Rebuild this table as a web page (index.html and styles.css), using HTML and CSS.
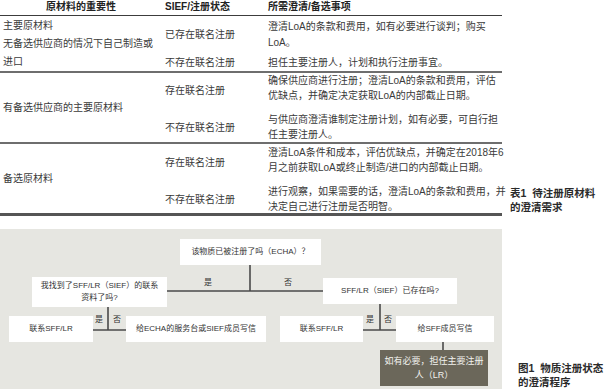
FILE: index.html
```html
<!DOCTYPE html>
<html lang="zh">
<head>
<meta charset="utf-8">
<link rel="stylesheet" href="styles.css">
</head>
<body>
<section class="top">
  <div class="tbl">
    <div class="hd hd1">原材料的重要性</div>
    <div class="hd">SIEF/注册状态</div>
    <div class="hd">所需澄清/备选事项</div>

    <div class="c1 g1 sep">主要原材料<br>无备选供应商的情况下自己制造或<br>进口</div>
    <div class="c2">已存在联名注册</div>
    <div class="c3">澄清LoA的条款和费用，如有必要进行谈判；购买<br>LoA。</div>
    <div class="c2 sep b1">不存在联名注册</div>
    <div class="c3 sep b1">担任主要注册人，计划和执行注册事宜。</div>

    <div class="c1 g2 sep">有备选供应商的主要原材料</div>
    <div class="c2">存在联名注册</div>
    <div class="c3 up">确保供应商进行注册；澄清LoA的条款和费用，评估<br>优缺点，并确定决定获取LoA的内部截止日期。</div>
    <div class="c2 sep b2">不存在联名注册</div>
    <div class="c3 sep b2">与供应商澄清谁制定注册计划，如有必要，可自行担<br>任主要注册人。</div>

    <div class="c1 g3 end">备选原材料</div>
    <div class="c2">存在联名注册</div>
    <div class="c3 up">澄清LoA条件和成本，评估优缺点，并确定在2018年6<br>月之前获取LoA或终止制造/进口的内部截止日期。</div>
    <div class="c2 end b2">不存在联名注册</div>
    <div class="c3 end b2">进行观察，如果需要的话，澄清LoA的条款和费用，并<br>决定自己进行注册是否明智。</div>
  </div>
  <p class="cap cap1">表1&nbsp; 待注册原材料<br>的澄清需求</p>
</section>

<section class="bottom">
  <div class="flow">
    <svg class="lines" width="502" height="160" viewBox="0 0 502 160">
      <g stroke="#4a4a4a" stroke-width="1.6" fill="none">
        <line x1="250" y1="36" x2="250" y2="62"/>
        <line x1="167" y1="62" x2="323" y2="62"/>
        <line x1="108" y1="78" x2="108" y2="101"/>
        <line x1="93" y1="101" x2="126" y2="101"/>
        <line x1="380" y1="75" x2="380" y2="101"/>
        <line x1="363" y1="101" x2="396" y2="101"/>
        <line x1="443" y1="113" x2="443" y2="121"/>
      </g>
    </svg>
    <div class="box q1">该物质已被注册了吗（ECHA）？</div>
    <div class="box q2l">我找到了SFF/LR（SIEF）的联系<br>资料了吗?</div>
    <div class="box q2r">SFF/LR（SIEF）已存在吗?</div>
    <div class="box a1">联系SFF/LR</div>
    <div class="box a2">给ECHA的服务台或SIEF成员写信</div>
    <div class="box a3">联系SFF/LR</div>
    <div class="box a4">给SFF成员写信</div>
    <div class="box a5">如有必要，担任主要注册<br>人（LR）</div>
    <span class="lbl l1">是</span>
    <span class="lbl l2">否</span>
    <span class="lbl l3">是</span>
    <span class="lbl l4">否</span>
    <span class="lbl l5">是</span>
    <span class="lbl l6">否</span>
  </div>
  <p class="cap cap2">图1&nbsp; 物质注册状态<br>的澄清程序</p>
</section>
</body>
</html>
```
FILE: styles.css
```css
* { box-sizing: border-box; }
html, body { margin: 0; padding: 0; background: #fff; }
body {
  width: 616px;
  height: 389px;
  overflow: hidden;
  font-family: "Liberation Sans", "Noto Sans CJK SC", sans-serif;
  color: #3a3a3a;
}

.top { display: flex; align-items: flex-end; }

.tbl {
  display: grid;
  flex: none;
  width: 502px;
  grid-template-columns: 162px 103px 237px;
  grid-template-rows: 16px 37px 20px 35px 36px 37px 35px;
  font-size: 10px;
}
.tbl > div { display: flex; align-items: center; white-space: nowrap; }

.hd {
  border-bottom: 1px solid #3c3c3c;
  font-weight: bold;
  color: #222;
  padding-left: 3px;
  line-height: 14px;
  padding-bottom: 1px;
}
.hd1 { justify-content: center; padding-left: 0; }

.c1 { grid-column: 1; padding-left: 3px; line-height: 18px; }
.g1 { grid-row: 2 / span 2; padding-top: 1px; }
.g2 { grid-row: 4 / span 2; }
.g3 { grid-row: 6 / span 2; }

.c2 { grid-column: 2; padding-left: 3px; line-height: 15px; }
.c3 { grid-column: 3; padding-left: 3px; line-height: 15.5px; }
.up { padding-bottom: 5px; }
.b1 { padding-top: 1px; }
.b2 { padding-top: 4px; }

.sep { border-bottom: 2px solid #6e6e6e; }
.end { border-bottom: 3px solid #555; }

.cap {
  margin: 0;
  font-size: 10.5px;
  font-weight: bold;
  color: #2a2a2a;
  line-height: 14px;
  white-space: nowrap;
}
.cap1 { margin-left: 8px; margin-bottom: 2px; }

.bottom { display: flex; align-items: flex-end; margin-top: 13px; }

.flow {
  position: relative;
  width: 502px;
  height: 160px;
  background: #e6e6e1;
  flex: none;
}
.lines { position: absolute; left: 0; top: 0; }

.box {
  position: absolute;
  background: #fff;
  display: flex;
  align-items: center;
  justify-content: center;
  text-align: center;
  font-size: 8px;
  line-height: 12.5px;
  color: #333;
  white-space: nowrap;
}
.q1 { left: 180px; top: 10px; width: 141px; height: 26px; }
.q2l { left: 32px; top: 48px; width: 135px; height: 30px; }
.q2r { left: 323px; top: 49px; width: 134px; height: 26px; }
.a1 { left: 9px; top: 87px; width: 84px; height: 26px; }
.a2 { left: 126px; top: 87px; width: 140px; height: 26px; }
.a3 { left: 280px; top: 87px; width: 83px; height: 26px; }
.a4 { left: 396px; top: 87px; width: 98px; height: 26px; }
.a5 {
  left: 380px; top: 121px; width: 108px; height: 36px;
  background: #6b675a;
  color: #f2f2ee;
  font-size: 9px;
  line-height: 14px;
}

.lbl {
  position: absolute;
  font-size: 8px;
  line-height: 10px;
  color: #333;
  width: 10px;
  text-align: center;
}
.l1 { left: 203px; top: 49px; }
.l2 { left: 283px; top: 49px; }
.l3 { left: 94px; top: 86px; }
.l4 { left: 112px; top: 86px; }
.l5 { left: 365px; top: 86px; }
.l6 { left: 383px; top: 86px; }

.cap2 { margin-left: 16px; }
```
